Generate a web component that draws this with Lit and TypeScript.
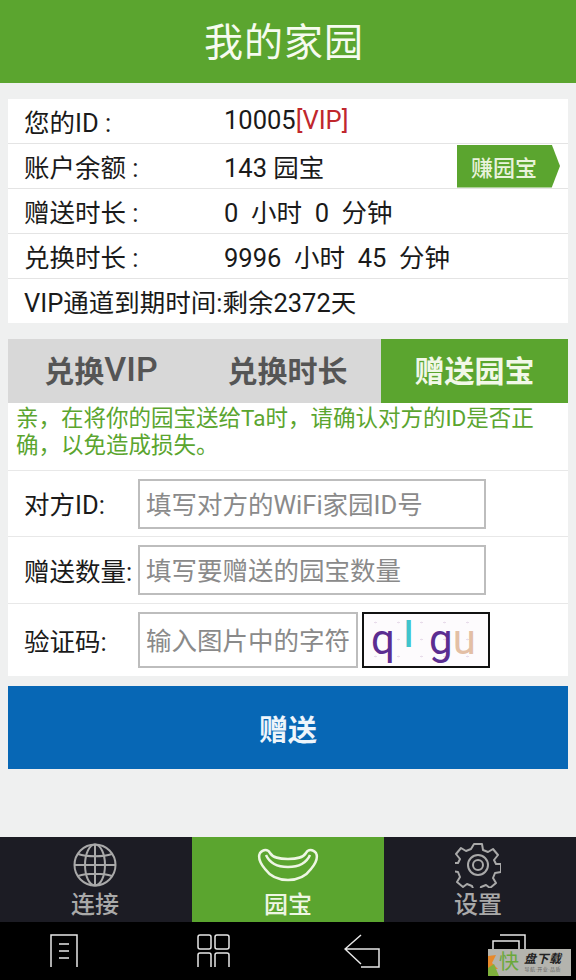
import { LitElement, html, css, svg } from "lit";
import { customElement } from "lit/decorators.js";

const FONT = css`Roboto, "Noto Sans CJK SC", sans-serif`;

const globeIcon = svg`<svg class="tab-icon" width="46" height="46" viewBox="0 0 46 46" fill="none" stroke="#a9a9a9" stroke-width="2">
  <circle cx="23" cy="23" r="20.5"/>
  <ellipse cx="23" cy="23" rx="10" ry="20.5"/>
  <path d="M23 2.5v41M2.5 23h41M6 12c9 3 25 3 34 0M6 34c9-3 25-3 34 0"/>
</svg>`;

const ingotIcon = svg`<svg class="tab-icon" width="62" height="46" viewBox="0 0 62 46" fill="none" stroke="#eef6e4" stroke-width="2.5" stroke-linejoin="round">
  <path d="M3 11c3-4 8-4 10 0 3 5 9 6 18 6s15-1 18-6c2-4 7-4 10 0 2 4 0 10-5 16-5 7-13 11-23 11S13 34 8 27C3 21 1 15 3 11z"/>
  <path d="M9 13c4 9 12 12 22 12s18-3 22-12"/>
</svg>`;

const gearIcon = svg`<svg class="tab-icon" width="46" height="46" viewBox="0 0 46 46" fill="none" stroke="#a9a9a9" stroke-width="2" stroke-linejoin="round">
  <path d="M19 2h8l1 6 5 2 5-3 5 6-4 5 2 4h5v8l-6 1-2 5 3 5-6 5-4-3-5 2-1 4h-6l-2-5-5-2-4 3-6-5 3-5-2-5-5-1v-8h5l2-4-4-5 5-6 5 3 5-2z"/>
  <circle cx="23" cy="23" r="10"/>
  <circle cx="23" cy="23" r="5"/>
</svg>`;

const menuIcon = svg`<svg width="36" height="34" viewBox="0 0 36 34" fill="none" stroke="#e8e8e8" stroke-width="1.5">
  <path d="M3 33V1h26v32M11 10h10M11 17h10M11 24h10"/>
</svg>`;

const gridIcon = svg`<svg width="36" height="34" viewBox="0 0 36 34" fill="none" stroke="#e8e8e8" stroke-width="1.5">
  <path d="M4 1h9a2 2 0 0 1 2 2v10a2 2 0 0 1-2 2H4a2 2 0 0 1-2-2V3a2 2 0 0 1 2-2z"/>
  <path d="M21 1h10a2 2 0 0 1 2 2v10a2 2 0 0 1-2 2H21a2 2 0 0 1-2-2V3a2 2 0 0 1 2-2z"/>
  <path d="M2 33V21a2 2 0 0 1 2-2h9a2 2 0 0 1 2 2v12"/>
  <path d="M19 33V21a2 2 0 0 1 2-2h10a2 2 0 0 1 2 2v12"/>
</svg>`;

const backIcon = svg`<svg width="36" height="34" viewBox="0 0 36 34" fill="none" stroke="#e8e8e8" stroke-width="1.5">
  <path d="M17 1L1 15l16 15M1 15h34v18H17"/>
</svg>`;

const recentIcon = svg`<svg width="36" height="34" viewBox="0 0 36 34" fill="none" stroke="#e8e8e8" stroke-width="1.5">
  <path d="M1 33V7h26v26H1M8 1h25v26"/>
</svg>`;

@customElement("app-root")
export class AppRoot extends LitElement {
  static styles = css`
    :host {
      display: flex;
      flex-direction: column;
      position: relative;
      height: 980px;
      overflow: hidden;
      background: #eff0f0;
      font-family: ${FONT};
      color: #1a1a1a;
    }

    .title {
      height: 83px;
      flex-shrink: 0;
      box-sizing: border-box;
      padding: 0 8px 6px 0;
      display: flex;
      align-items: center;
      justify-content: center;
      background: #5ba52f;
      color: #f6fbef;
      font-size: 39px;
      letter-spacing: 1px;
    }

    .content {
      flex: 1;
      display: flex;
      flex-direction: column;
      padding: 16px 8px 0;
    }

    .info {
      display: flex;
      flex-direction: column;
      gap: 1px;
      background: #e4e4e4;
      height: 224px;
    }

    .info-row {
      flex: 1;
      display: flex;
      align-items: center;
      padding: 0 8px 2px 16px;
      background: #fff;
      font-size: 25.5px;
      white-space: nowrap;
    }

    .label {
      width: 200px;
      flex-shrink: 0;
    }

    .vip {
      color: #c0272d;
    }

    .earn {
      margin-left: auto;
      margin-bottom: -2px;
      width: 103px;
      height: 43px;
      box-sizing: border-box;
      padding-left: 14px;
      display: flex;
      align-items: center;
      background: #5ba52f;
      clip-path: polygon(0 0, 92% 0, 100% 50%, 92% 100%, 0 100%);
      color: #e9f3dc;
      font-size: 22px;
      font-weight: 500;
    }

    .tabs {
      margin-top: 16px;
      height: 64px;
      display: grid;
      grid-template-columns: 186px 187px 187px;
      background: #d8d8d8;
    }

    .tabs div {
      display: flex;
      align-items: center;
      justify-content: center;
      box-sizing: border-box;
      padding-bottom: 4px;
      color: #555;
      font-size: 30px;
      font-weight: 700;
    }

    .tabs .latin {
      font-size: 34px;
      font-weight: 500;
    }

    .tabs .on {
      background: #5ba52f;
      color: #f2f8e8;
    }

    .notice {
      height: 67px;
      margin: 0;
      box-sizing: border-box;
      padding: 2px 8px 0;
      background: #fff;
      color: #5ba52f;
      font-size: 22.5px;
      line-height: 27px;
    }

    .form {
      display: flex;
      flex-direction: column;
      background: #e8e8e8;
      gap: 1px;
      padding-top: 1px;
    }

    .form-row {
      height: 66px;
      display: flex;
      align-items: center;
      gap: 4px;
      box-sizing: border-box;
      padding-left: 16px;
      background: #fff;
      font-size: 25.5px;
      white-space: nowrap;
    }

    .form-row.first {
      height: 65px;
    }

    .form-row.tall {
      height: 72px;
    }

    .form-label {
      width: 114px;
      flex-shrink: 0;
      margin-right: -4px;
      padding-bottom: 2px;
    }

    input {
      width: 348px;
      height: 50px;
      box-sizing: border-box;
      padding: 2px 6px 0;
      border: 2px solid #bdbdbd;
      border-radius: 0;
      outline: none;
      background: #fff;
      font-family: inherit;
      font-size: 25.5px;
      color: #333;
    }

    input.short {
      width: 220px;
      height: 56px;
    }

    input::placeholder {
      color: #8a8a8a;
      opacity: 1;
    }

    .captcha {
      width: 128px;
      height: 56px;
      box-sizing: border-box;
      border: 2px solid #111;
      display: flex;
      align-items: center;
      padding-left: 7px;
      background-color: #fdfbfd;
      background-image: radial-gradient(#e8dcea 1px, transparent 1.5px);
      background-size: 23px 17px;
      font-size: 42px;
      line-height: 1;
    }

    .captcha span {
      position: relative;
    }

    .q,
    .g {
      color: #5b2d91;
    }

    .l {
      color: #3fc4cc;
      font-size: 36px;
      font-weight: 500;
      margin: 0 16px 0 9px;
      top: -5px;
    }

    .u {
      color: #e3bfa5;
    }

    .send {
      margin-top: 10px;
      height: 83px;
      border: 0;
      background: #0767b5;
      color: #eef5fb;
      font-family: inherit;
      font-size: 29px;
      font-weight: 700;
    }

    .tabbar {
      height: 85px;
      flex-shrink: 0;
      display: grid;
      grid-template-columns: repeat(3, 192px);
      background: #1c1c24;
    }

    .tabbar div {
      display: flex;
      flex-direction: column;
      align-items: center;
      box-sizing: border-box;
      color: #a9a9a9;
      font-size: 24px;
      font-weight: 500;
      line-height: 32px;
    }

    .tabbar div:first-child {
      padding-right: 2px;
    }

    .tabbar div:last-child {
      padding-right: 4px;
    }

    .tab-icon {
      height: 46px;
      margin-top: 5px;
      margin-bottom: 1px;
    }

    .tabbar .on {
      background: #5ba52f;
      color: #eef6e4;
    }

    .sysbar {
      height: 58px;
      flex-shrink: 0;
      display: grid;
      grid-template-columns: repeat(4, 148px);
      align-items: center;
      padding-left: 48px;
      background: #000;
    }

    .sysbar svg {
      display: block;
    }

    .stamp {
      position: absolute;
      left: 488px;
      top: 949px;
      width: 83px;
      height: 27px;
      display: flex;
      align-items: center;
      background: #b4b4ae;
      overflow: hidden;
    }

    .stamp-mark {
      width: 11px;
      height: 27px;
      flex-shrink: 0;
    }

    .stamp-fast {
      width: 25px;
      color: #6aa83a;
      font-size: 20px;
      line-height: 27px;
    }

    .stamp-name {
      display: flex;
      flex-direction: column;
      align-items: center;
      color: #222;
      font-size: 12px;
      line-height: 13px;
      font-weight: 700;
      font-style: italic;
      letter-spacing: 0.5px;
    }

    .stamp-name small {
      color: #666;
      font-size: 5px;
      line-height: 7px;
      font-weight: 400;
      font-style: normal;
    }
  `;

  render() {
    return html`
      <header class="title">我的家园</header>

      <main class="content">
        <section class="info">
          <div class="info-row">
            <span class="label">您的ID :</span>
            <span>10005<span class="vip">[VIP]</span></span>
          </div>
          <div class="info-row">
            <span class="label">账户余额 :</span>
            <span>143 园宝</span>
            <span class="earn">赚园宝</span>
          </div>
          <div class="info-row">
            <span class="label">赠送时长 :</span>
            <span>0&nbsp; 小时&nbsp; 0&nbsp; 分钟</span>
          </div>
          <div class="info-row">
            <span class="label">兑换时长 :</span>
            <span>9996&nbsp; 小时&nbsp; 45&nbsp; 分钟</span>
          </div>
          <div class="info-row">VIP通道到期时间:剩余2372天</div>
        </section>

        <nav class="tabs">
          <div>兑换<span class="latin">VIP</span></div>
          <div>兑换时长</div>
          <div class="on">赠送园宝</div>
        </nav>

        <p class="notice">亲，在将你的园宝送给Ta时，请确认对方的ID是否正确，以免造成损失。</p>

        <section class="form">
          <div class="form-row first">
            <span class="form-label">对方ID:</span>
            <input placeholder="填写对方的WiFi家园ID号" />
          </div>
          <div class="form-row">
            <span class="form-label">赠送数量:</span>
            <input placeholder="填写要赠送的园宝数量" />
          </div>
          <div class="form-row tall">
            <span class="form-label">验证码:</span>
            <input class="short" placeholder="输入图片中的字符" />
            <div class="captcha">
              <span class="q">q</span><span class="l">l</span><span class="g">g</span><span class="u">u</span>
            </div>
          </div>
        </section>

        <button class="send">赠送</button>
      </main>

      <footer class="tabbar">
        <div>${globeIcon}连接</div>
        <div class="on">${ingotIcon}园宝</div>
        <div>${gearIcon}设置</div>
      </footer>

      <div class="sysbar">${menuIcon}${gridIcon}${backIcon}${recentIcon}</div>

      <div class="stamp">
        <svg class="stamp-mark" viewBox="0 0 11 27">
          <path d="M0 7l8-1-4 8 6 6H0z" fill="#e8892b" />
          <path d="M0 27v-8l6-4 5 12z" fill="#7fb13c" />
        </svg>
        <span class="stamp-fast">快</span>
        <span class="stamp-name">盘下载<small>导航·开业·品质</small></span>
      </div>
    `;
  }
}
